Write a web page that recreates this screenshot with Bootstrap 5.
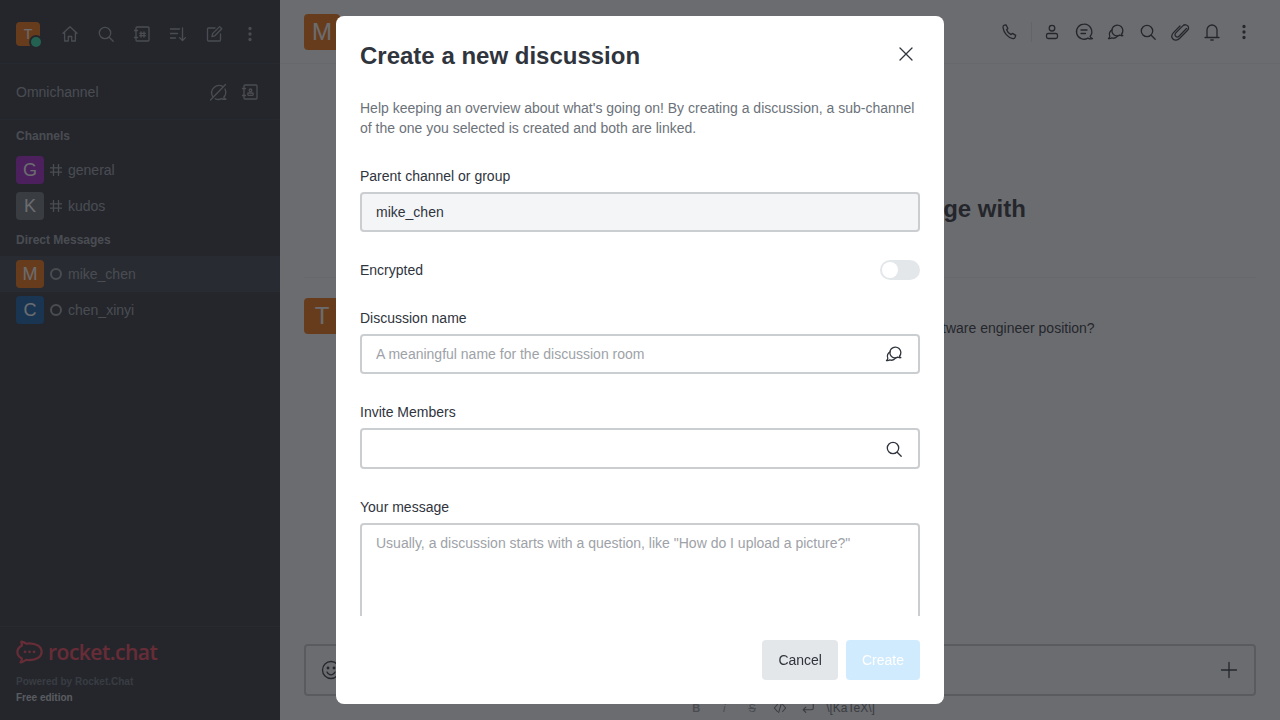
<!DOCTYPE html>
<html lang="en">
<head>
  <meta charset="UTF-8" />
  <meta name="viewport" content="width=device-width, initial-scale=1.0">
  <title>Create a new discussion</title>
  <link href="https://cdn.jsdelivr.net/npm/bootstrap@5.3.0/dist/css/bootstrap.min.css" rel="stylesheet">
  <style>
    html, body { height: 100%; overflow: hidden; }
    body { font-family: "Liberation Sans", Arial, sans-serif; font-size: 14px; line-height: 20px; color: #2f343d; }
    svg.ico { fill: none; stroke: currentColor; stroke-width: 1.3; stroke-linecap: round; stroke-linejoin: round; flex: none; }

    /* sidebar */
    .side { width: 280px; flex: none; background: #2f343d; color: #9ea2a8; }
    .side-top { height: 64px; padding: 4px 16px 0 16px; border-bottom: 1px solid #383d47; color: #9ea2a8; }
    .side-avatar { width: 24px; height: 24px; border-radius: 4px; background: #f3730f; color: #fff; font-size: 14px; position: relative; }
    .side-dot { position: absolute; width: 10px; height: 10px; right: -1px; bottom: -1px; border-radius: 50%; background: #2de0a5; box-shadow: 0 0 0 2px #2f343d; }
    .side-tools { margin-left: 18px; gap: 12px; }
    .omni { height: 56px; padding: 0 18px 0 16px; border-bottom: 1px solid #383d47; font-size: 14px; }
    .omni-tools { gap: 8px; }
    .group-label { font-size: 12px; font-weight: 700; line-height: 16px; padding: 0 16px; margin-bottom: 8px; }
    .room { height: 36px; padding: 0 16px; gap: 6px; }
    .room.active { background: #3c424c; }
    .room-avatar { width: 28px; height: 28px; border-radius: 4px; color: #fff; font-size: 18px; }
    .room-name { font-size: 14px; }
    .status-ring { width: 12px; height: 12px; border: 2px solid #9ea2a8; border-radius: 50%; }
    .side-foot { height: 94px; padding: 12px 16px 0; border-top: 1px solid #383d47; }
    .rc-logo { color: #f5455c; gap: 5px; height: 26px; }
    .rc-word { font-family: "Open Sans", sans-serif; font-weight: 600; font-size: 21px; line-height: 26px; letter-spacing: -.5px; }
    .foot-text { font-size: 10px; font-weight: 700; line-height: 16px; }
    .foot-text.muted-line { margin-top: 9px; color: #6c727a; }
    .foot-text.free-line { color: #cbced1; }

    /* room */
    .room-pane { background: #fff; min-width: 0; }
    .room-head { height: 64px; padding: 0 24px; border-bottom: 1px solid #f2f3f5; color: #2f343d; }
    .head-avatar { width: 36px; height: 36px; border-radius: 4px; background: #f3730f; color: #fff; font-size: 24px; }
    .head-tools { gap: 12px; margin-right: 2px; }
    .head-sep { width: 1px; height: 20px; background: #e4e7ea; margin: 0 -2px 0 -1px; }
    .room-body { padding: 0 24px; min-height: 0; }
    .start-title { font-size: 24px; line-height: 32px; font-weight: 700; text-align: center; margin-top: 129px; padding-bottom: 52px; border-bottom: 1px solid #f2f3f5; white-space: nowrap; }
    .msg { margin-top: 20px; gap: 12px; }
    .msg-avatar { width: 36px; height: 36px; border-radius: 4px; background: #f3730f; color: #fff; font-size: 24px; flex: none; }
    .msg-line { margin-top: 20px; white-space: nowrap; }
    .composer { margin: 0 24px; height: 52px; border: 2px solid #cbced1; border-radius: 4px; padding: 0 13px; }
    .fmt-bar { height: 24px; padding: 0 24px 0 28px; gap: 14px; font-size: 12px; color: #6c727a; }
    .fmt-bar span { width: 14px; text-align: center; }
    .fmt-bar .fmt-faint { color: #9ea2a8; font-size: 11px; }
    .fmt-bar .fmt-katex { width: auto; margin-left: -3px; }

    /* overlay + modal */
    .dim { position: fixed; inset: 0; background: rgba(30, 32, 36, .66); z-index: 10; }
    .discussion-modal { position: fixed; left: 336px; top: 16px; width: 608px; height: 688px; z-index: 20; background: #fff; border: 0; border-radius: 8px; }
    .dm-head { padding: 24px 24px 0; height: 82px; flex: none; align-items: flex-start; }
    .dm-title { font-size: 24px; line-height: 32px; font-weight: 700; color: #2f343d; margin: 0; }
    .dm-close { background: none; border: 0; padding: 0; width: 20px; height: 20px; margin: 4px 4px 0 0; color: #2f343d; line-height: 0; }
    .dm-body { padding: 0 24px; overflow: hidden; min-height: 0; }
    .dm-intro { color: #6c727a; margin-bottom: 28px; }
    .dm-field { margin-bottom: 28px; }
    .dm-label { color: #2f343d; display: block; margin-bottom: 6px; line-height: 20px; }
    .dm-input { height: 40px; border: 2px solid #cbced1; border-radius: 4px; padding: 0 14px; color: #2f343d; font-size: 14px; box-shadow: none; }
    .dm-input::placeholder { color: #9ea2a8; opacity: 1; }
    .dm-input[disabled] { background: #f4f5f7; }
    .dm-input.tall { height: 41px; }
    .dm-area { height: 125px; padding: 8px 14px; resize: none; }
    .dm-wrap { position: relative; }
    .dm-wrap svg { position: absolute; right: 16px; top: 50%; transform: translateY(-50%); color: #2f343d; }
    .dm-toggle { width: 40px; height: 20px; border-radius: 10px; background: #e4e7ea; padding: 2px; }
    .dm-toggle i { display: block; width: 16px; height: 16px; background: #fff; border-radius: 50%; }
    .dm-foot { padding: 24px; gap: 8px; flex: none; }
    .dm-btn { height: 40px; border: 0; border-radius: 4px; padding: 0 16px; font-size: 14px; line-height: 20px; }
    .dm-cancel { background: #e4e7ea; color: #2f343d; }
    .dm-create:disabled { background: #d1ebfe; color: #fff; opacity: 1; }
  </style>
</head>
<body>

<svg width="0" height="0" class="position-absolute">
  <defs>
    <symbol id="i-home" viewBox="0 0 20 20"><path d="M3 9.200 10 2.800l7 6.400M4.600 8v9h3.700v-4.500h3.400V17h3.700V8"/></symbol>
    <symbol id="i-search" viewBox="0 0 20 20"><circle cx="9" cy="9" r="5.700"/><path d="m13.200 13.200 4 4"/></symbol>
    <symbol id="i-book" viewBox="0 0 20 20"><rect x="4" y="3" width="13" height="14" rx="1"/><path d="M2.500 6.500h3M2.500 13.500h3M9 8v5M12 8v5M7.800 9.300h5.600M7.800 11.700h5.600"/></symbol>
    <symbol id="i-sort" viewBox="0 0 20 20"><path d="M2.500 5h9M2.500 9.500h7M2.500 14h5M14.500 4v12.500M11.600 13.600l2.900 3 2.900-3"/></symbol>
    <symbol id="i-edit" viewBox="0 0 20 20"><path d="M16.500 10v6a1 1 0 0 1-1 1h-11a1 1 0 0 1-1-1V5a1 1 0 0 1 1-1h6.500"/><path d="m8 12.500.6-2.900 7-7 2.200 2.200-7 7z"/></symbol>
    <symbol id="i-kebab" viewBox="0 0 20 20"><circle cx="10" cy="4.500" r="1" fill="currentColor"/><circle cx="10" cy="10" r="1" fill="currentColor"/><circle cx="10" cy="15.500" r="1" fill="currentColor"/></symbol>
    <symbol id="i-omni" viewBox="0 0 20 20"><path d="M4.600 14.500A7.500 7.500 0 0 1 15 4.500M17 7a7.500 7.500 0 0 1-1.200 8.200c.3 1 1.200 1.800 2.200 2-1.700.5-3.100.2-4.200-.6a7.500 7.500 0 0 1-6.500.2"/><path d="M2.500 18 17.500 2.500"/></symbol>
    <symbol id="i-contact" viewBox="0 0 20 20"><rect x="4" y="3" width="13" height="14" rx="1"/><path d="M2.500 6.500h3M2.500 13.500h3"/><circle cx="10.500" cy="8.300" r="1.300"/><rect x="7.800" y="11" width="5.400" height="2.400" rx=".8"/></symbol>
    <symbol id="i-phone" viewBox="0 0 20 20"><path d="M4.400 3.200 6 2.800l1.900 3.700-1.300 1.200c.7 2 2.300 3.800 4.400 4.900l1.400-1.200 3.300 2-.5 1.800c-.3 1-1.300 1.600-2.400 1.400C7.600 15.500 3.800 10.800 3 5.600c-.1-1.100.4-2.100 1.400-2.400z"/></symbol>
    <symbol id="i-user" viewBox="0 0 20 20"><circle cx="10" cy="6.200" r="2.800"/><rect x="4.500" y="11.500" width="11" height="5" rx="1.800"/></symbol>
    <symbol id="i-thread" viewBox="0 0 20 20"><path d="M10 2.200a7.500 7.500 0 1 0 3.900 13.900c1.300.8 2.800 1 4.600.6-1.100-.5-2-1.300-2.400-2.300A7.500 7.500 0 0 0 10 2.200z"/><path d="M7 8h6M7 11.500h4.500"/></symbol>
    <symbol id="i-disc" viewBox="0 0 20 20"><path d="M7.500 12.500A5.500 5.500 0 1 1 15.500 12.200c.2.700.7 1.200 1.300 1.500-1.100.2-2.300 0-3.100-.6A5.500 5.500 0 0 1 7.500 12.500z"/><path d="M6.200 7.800A4.800 4.800 0 0 0 3.800 14.200c-.1.900-.6 1.700-1.300 2.300 1.200.2 2.400 0 3.300-.6a5 5 0 0 0 5.700-1.700"/></symbol>
    <symbol id="i-clip" viewBox="0 0 20 20"><path d="M16.500 6.500 9 14.200c-1 1-2.400 1-3.300.1s-.9-2.400.1-3.400l7-7c1.700-1.700 4-1.300 5 0s.9 3.300-.7 4.900L9.500 16.500c-2.100 2.100-5 2.100-6.500.5s-1.500-4.300.5-6.400L10 4"/></symbol>
    <symbol id="i-bell" viewBox="0 0 20 20"><path d="M5 15V8a5 5 0 0 1 10 0v7M3 15.500h14M8.800 18h2.400"/></symbol>
    <symbol id="i-close" viewBox="0 0 20 20"><path d="m4 4 12 12M16 4 4 16"/></symbol>
    <symbol id="i-smile" viewBox="0 0 24 24"><circle cx="12" cy="12" r="8.500"/><circle cx="9" cy="10" r=".8" fill="currentColor"/><circle cx="15" cy="10" r=".8" fill="currentColor"/><path d="M8 14c1 2 2.500 2.800 4 2.800s3-.8 4-2.800"/></symbol>
    <symbol id="i-plus" viewBox="0 0 24 24"><path d="M12 4.500v15M4.500 12h15"/></symbol>
    <symbol id="i-hash" viewBox="1 1 12 12"><path d="M4.500 1.500v11M9.500 1.500v11M1.500 4.800h11M1.500 9.200h11"/></symbol>
    <symbol id="i-code" viewBox="0 0 16 16"><path d="M5 4 1.500 8 5 12M11 4l3.500 4-3.500 4M9.500 3l-3 10"/></symbol>
    <symbol id="i-return" viewBox="0 0 16 16"><path d="M14 3v5a2 2 0 0 1-2 2H2.500M5.500 7l-3 3 3 3"/></symbol>
    <symbol id="i-bubble" viewBox="0 0 30 26"><path d="M6 1.500c1.800.3 3.800 1.200 5.300 2.300 1.200-.3 2.500-.4 3.700-.4 7.700 0 13.500 3.900 13.500 9.400S22.700 22 15 22c-1.200 0-2.500-.1-3.700-.4-1.500 1.200-3.500 2.800-6.300 3 .9-1.200 1.600-2.600 1.600-4.400-3-1.600-5.100-4-5.100-7.300s2.100-5.600 5.100-7.200c0-1.600-.7-2.900-.6-4.200z" stroke-width="2.400"/><circle cx="10" cy="12.800" r="1.500" fill="currentColor" stroke="none"/><circle cx="15" cy="12.800" r="1.500" fill="currentColor" stroke="none"/><circle cx="20" cy="12.800" r="1.500" fill="currentColor" stroke="none"/></symbol>
  </defs>
</svg>

<div class="d-flex vh-100">
  <aside class="side d-flex flex-column">
    <div class="side-top d-flex align-items-center">
      <div class="side-avatar d-flex align-items-center justify-content-center">T<span class="side-dot"></span></div>
      <div class="side-tools d-flex align-items-center">
        <svg class="ico" width="24" height="20"><use href="#i-home"/></svg>
        <svg class="ico" width="24" height="20"><use href="#i-search"/></svg>
        <svg class="ico" width="24" height="20"><use href="#i-book"/></svg>
        <svg class="ico" width="24" height="20"><use href="#i-sort"/></svg>
        <svg class="ico" width="24" height="20"><use href="#i-edit"/></svg>
        <svg class="ico" width="24" height="20"><use href="#i-kebab"/></svg>
      </div>
    </div>
    <div class="omni d-flex align-items-center justify-content-between">
      <span>Omnichannel</span>
      <div class="omni-tools d-flex">
        <svg class="ico" width="24" height="20"><use href="#i-omni"/></svg>
        <svg class="ico" width="24" height="20"><use href="#i-contact"/></svg>
      </div>
    </div>
    <div class="flex-grow-1 pt-2">
      <div class="group-label">Channels</div>
      <div class="room d-flex align-items-center">
        <div class="room-avatar d-flex align-items-center justify-content-center" style="background:#a020c8">G</div>
        <svg class="ico" width="12" height="12"><use href="#i-hash"/></svg>
        <span class="room-name">general</span>
      </div>
      <div class="room d-flex align-items-center">
        <div class="room-avatar d-flex align-items-center justify-content-center" style="background:#6c727a">K</div>
        <svg class="ico" width="12" height="12"><use href="#i-hash"/></svg>
        <span class="room-name">kudos</span>
      </div>
      <div class="group-label mt-2">Direct Messages</div>
      <div class="room active d-flex align-items-center">
        <div class="room-avatar d-flex align-items-center justify-content-center" style="background:#f3730f">M</div>
        <span class="status-ring"></span>
        <span class="room-name">mike_chen</span>
      </div>
      <div class="room d-flex align-items-center">
        <div class="room-avatar d-flex align-items-center justify-content-center" style="background:#0f5fa8">C</div>
        <span class="status-ring"></span>
        <span class="room-name">chen_xinyi</span>
      </div>
    </div>
    <div class="side-foot">
      <div class="rc-logo d-flex align-items-center">
        <svg class="ico" width="27" height="24"><use href="#i-bubble"/></svg>
        <span class="rc-word">rocket.chat</span>
      </div>
      <div class="foot-text muted-line">Powered by Rocket.Chat</div>
      <div class="foot-text free-line">Free edition</div>
    </div>
  </aside>

  <main class="room-pane flex-grow-1 d-flex flex-column">
    <div class="room-head d-flex align-items-center justify-content-between">
      <div class="head-avatar d-flex align-items-center justify-content-center">M</div>
      <div class="head-tools d-flex align-items-center">
        <svg class="ico" width="20" height="20"><use href="#i-phone"/></svg>
        <span class="head-sep"></span>
        <svg class="ico" width="20" height="20"><use href="#i-user"/></svg>
        <svg class="ico" width="20" height="20"><use href="#i-thread"/></svg>
        <svg class="ico" width="20" height="20"><use href="#i-disc"/></svg>
        <svg class="ico" width="20" height="20"><use href="#i-search"/></svg>
        <svg class="ico" width="20" height="20"><use href="#i-clip"/></svg>
        <svg class="ico" width="20" height="20"><use href="#i-bell"/></svg>
        <svg class="ico" width="20" height="20"><use href="#i-kebab"/></svg>
      </div>
    </div>
    <div class="room-body flex-grow-1">
      <div class="start-title">You have joined a new direct message with</div>
      <div class="msg d-flex">
        <div class="msg-avatar d-flex align-items-center justify-content-center">T</div>
        <div class="msg-line">Hey Mike, thanks for your time today. Would you walk me through your interest in the senior software engineer position?</div>
      </div>
    </div>
    <div class="composer d-flex align-items-center justify-content-between">
      <svg class="ico" width="24" height="24"><use href="#i-smile"/></svg>
      <svg class="ico" width="24" height="24"><use href="#i-plus"/></svg>
    </div>
    <div class="fmt-bar d-flex align-items-center justify-content-center">
      <span class="fw-bold fmt-faint">B</span>
      <span class="fst-italic fmt-faint">i</span>
      <span class="text-decoration-line-through fmt-faint">S</span>
      <svg class="ico" width="14" height="14"><use href="#i-code"/></svg>
      <svg class="ico" width="14" height="14"><use href="#i-return"/></svg>
      <span class="fmt-katex">\[KaTeX\]</span>
    </div>
  </main>
</div>

<div class="dim"></div>

<div class="discussion-modal modal-content d-flex flex-column">
  <div class="dm-head d-flex justify-content-between">
    <h1 class="dm-title">Create a new discussion</h1>
    <button class="dm-close" type="button" aria-label="Close"><svg class="ico" width="20" height="20"><use href="#i-close"/></svg></button>
  </div>
  <div class="dm-body flex-grow-1">
    <p class="dm-intro">Help keeping an overview about what's going on! By creating a discussion, a sub-channel of the one you selected is created and both are linked.</p>
    <div class="dm-field">
      <label class="dm-label">Parent channel or group</label>
      <input class="form-control dm-input" type="text" value="mike_chen" disabled>
    </div>
    <div class="dm-field d-flex align-items-center justify-content-between">
      <span>Encrypted</span>
      <span class="dm-toggle"><i></i></span>
    </div>
    <div class="dm-field">
      <label class="dm-label">Discussion name</label>
      <div class="dm-wrap">
        <input class="form-control dm-input" type="text" placeholder="A meaningful name for the discussion room">
        <svg class="ico" width="20" height="20"><use href="#i-disc"/></svg>
      </div>
    </div>
    <div class="dm-field">
      <label class="dm-label">Invite Members</label>
      <div class="dm-wrap">
        <input class="form-control dm-input tall" type="text">
        <svg class="ico" width="20" height="20"><use href="#i-search"/></svg>
      </div>
    </div>
    <div class="dm-field">
      <label class="dm-label">Your message</label>
      <textarea class="form-control dm-input dm-area" placeholder="Usually, a discussion starts with a question, like &quot;How do I upload a picture?&quot;"></textarea>
    </div>
  </div>
  <div class="dm-foot d-flex justify-content-end">
    <button class="btn dm-btn dm-cancel" type="button">Cancel</button>
    <button class="btn dm-btn dm-create" type="button" disabled>Create</button>
  </div>
</div>

<script src="https://cdn.jsdelivr.net/npm/bootstrap@5.3.0/dist/js/bootstrap.bundle.min.js"></script>
</body>
</html>
